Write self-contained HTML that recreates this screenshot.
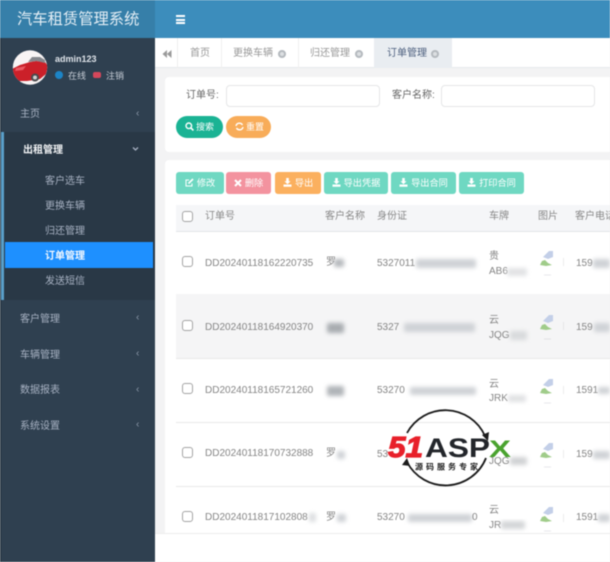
<!DOCTYPE html>
<html><head><meta charset="utf-8">
<style>
*{box-sizing:border-box}
html,body{margin:0;padding:0;width:610px;height:562px;overflow:hidden;background:#f3f3f4;font-family:"Liberation Sans","Noto Sans CJK SC",sans-serif;color:#676a6c}
.a{position:absolute;white-space:nowrap}
#root{position:relative;width:610px;height:562px;overflow:hidden;filter:blur(.5px)}
.m{font-size:10px;color:#a7b1c2;line-height:14px}
.ch{font-size:10px;color:#8d99aa;line-height:14px}
.sub{font-size:10px;color:#a7b1c2;line-height:14px;left:45px}
.tab{font-size:10px;color:#999;line-height:14px;top:47px}
.x{width:8px;height:8px;border-radius:50%;background:#dcdfe2;border:2px solid #b4b9be;top:50px}
.inp{height:22px;width:154px;top:85px;background:#fff;border:1px solid #e5e6e7;border-radius:4px}
.btn{height:22px;top:172px;border-radius:3px;color:#fff;font-size:9.2px;line-height:22px;text-align:center}
.btn svg{vertical-align:-1px;margin-right:3px}
.g{background:#6fd8c2}
.cb{width:11px;height:11px;border:1px solid #a4a4a4;border-radius:3px;left:182px;background:#fff}
.th{font-size:10px;color:#888;line-height:14px;top:210px}
.td{font-size:10px;color:#858585;line-height:14px}
.bl{position:absolute;background:#cfd2d6;filter:blur(2.2px);border-radius:2px}
.pic{width:18px;height:28px;left:538px}
</style></head><body><div id="root">

<div class="a" style="left:0;top:0;width:610px;height:38px;background:#3c8dbc"></div>
<div class="a" style="left:0;top:0;width:155px;height:38px;background:#367fa9"></div>
<div class="a" style="left:17px;top:10px;font-size:15.3px;line-height:20px;color:#e4eef5">汽车租赁管理系统</div>
<div class="a" style="left:176px;top:15px;width:9px;height:2px;background:#fff"></div>
<div class="a" style="left:176px;top:18.5px;width:9px;height:2px;background:#fff"></div>
<div class="a" style="left:176px;top:22px;width:9px;height:2px;background:#fff"></div>

<div class="a" style="left:0;top:38px;width:155px;height:524px;background:#2f4050"></div>
<div class="a" style="left:0;top:38px;width:1px;height:524px;background:#1e2c39"></div>
<div class="a" style="left:1px;top:132px;width:154px;height:168px;background:#293846"></div>
<div class="a" style="left:1px;top:132px;width:3px;height:168px;background:#5a9fc9"></div>

<svg class="a" style="left:12px;top:49px" width="36" height="37" viewBox="0 0 36 37">
<defs><clipPath id="c"><circle cx="18" cy="18.5" r="17.2"/></clipPath></defs>
<circle cx="18" cy="18.5" r="17.2" fill="#f8f4f4"/>
<g clip-path="url(#c)">
<path d="M0 20 L8 16 L18 13 L24 12 L33 13 L36 17 L34 25 L28 30 L15 32 L5 32 L0 28Z" fill="#cb2029"/>
<path d="M16 13 L20 8 L28 8 L33 11 L33 14 L25 12Z" fill="#85878c"/>
<path d="M4 19 L14 17 L11 21 L3 22Z" fill="#ea5a63"/>
<circle cx="23" cy="28.5" r="4" fill="#4a4a4d"/><circle cx="23" cy="28.5" r="2" fill="#cfcfcf"/>
<path d="M0 28 L8 32 L3 35Z" fill="#7c2a2e"/>
</g></svg>
<div class="a" style="left:55px;top:52px;font-size:9px;font-weight:bold;color:#dfe4ea;line-height:14px">admin123</div>
<div class="a" style="left:55px;top:71px;width:8px;height:8px;border-radius:50%;background:#1c84c6"></div>
<div class="a" style="left:68px;top:69px;font-size:9px;color:#c5ccd5;line-height:14px">在线</div>
<div class="a" style="left:93px;top:72px;width:8px;height:6px;border-radius:2px;background:#d5475b"></div>
<div class="a" style="left:106px;top:69px;font-size:9px;color:#c5ccd5;line-height:14px">注销</div>

<div class="a m" style="left:20px;top:108px">主页</div><div class="a ch" style="left:136px;top:107px">‹</div>
<div class="a" style="left:23px;top:144px;font-size:10px;font-weight:bold;color:#f0f2f4;line-height:14px">出租管理</div>
<svg class="a" style="left:132px;top:146px" width="7" height="6"><path d="M1 1.5 L3.5 4 L6 1.5" fill="none" stroke="#a7b1c2" stroke-width="1.3"/></svg>
<div class="a sub" style="top:175px">客户选车</div>
<div class="a sub" style="top:200px">更换车辆</div>
<div class="a sub" style="top:225px">归还管理</div>
<div class="a" style="left:5px;top:242px;width:148px;height:26px;background:#1e90ff"></div>
<div class="a sub" style="top:250px;color:#f2f8ff;font-weight:bold">订单管理</div>
<div class="a sub" style="top:275px">发送短信</div>
<div class="a m" style="left:20px;top:313px">客户管理</div><div class="a ch" style="left:136px;top:311px">‹</div>
<div class="a m" style="left:20px;top:349px">车辆管理</div><div class="a ch" style="left:136px;top:347px">‹</div>
<div class="a m" style="left:20px;top:384px">数据报表</div><div class="a ch" style="left:136px;top:383px">‹</div>
<div class="a m" style="left:20px;top:420px">系统设置</div><div class="a ch" style="left:136px;top:418px">‹</div>

<div class="a" style="left:155px;top:38px;width:455px;height:30px;background:#fff;border-bottom:1px solid #e7eaec"></div>
<div class="a" style="left:177px;top:38px;width:1px;height:30px;background:#eee"></div>
<div class="a" style="left:221px;top:38px;width:1px;height:30px;background:#f0f0f0"></div>
<div class="a" style="left:298px;top:38px;width:1px;height:30px;background:#f0f0f0"></div>
<div class="a" style="left:374px;top:38px;width:78px;height:30px;background:#e9edf1"></div>
<svg class="a" style="left:162px;top:50px" width="10" height="8"><path d="M5 0 L0.5 4 L5 8Z M9.5 0 L5 4 L9.5 8Z" fill="#9a9a9a"/></svg>
<div class="a tab" style="left:190px">首页</div>
<div class="a tab" style="left:233px">更换车辆</div><div class="a x" style="left:278px"></div>
<div class="a tab" style="left:310px">归还管理</div><div class="a x" style="left:355px"></div>
<div class="a tab" style="left:387px;color:#4c5f7e">订单管理</div><div class="a x" style="left:431px"></div>

<div class="a" style="left:165px;top:77px;width:445px;height:75px;background:#fff;border-radius:4px 0 0 4px"></div>
<div class="a" style="left:186px;top:89px;font-size:10px;line-height:14px;color:#666">订单号:</div>
<div class="a inp" style="left:226px"></div>
<div class="a" style="left:392px;top:89px;font-size:10px;line-height:14px;color:#666">客户名称:</div>
<div class="a inp" style="left:441px"></div>
<div class="a" style="left:176px;top:116px;width:47px;height:22px;border-radius:11px;background:#1ab394;color:#fff;font-size:9px;line-height:22px;padding-left:9px">
<svg width="9" height="9" viewBox="0 0 9 9" style="vertical-align:-1px;margin-right:2px"><circle cx="3.8" cy="3.8" r="2.8" fill="none" stroke="#fff" stroke-width="1.4"/><path d="M6 6 L8.4 8.4" stroke="#fff" stroke-width="1.6"/></svg>搜索</div>
<div class="a" style="left:226px;top:116px;width:45px;height:22px;border-radius:11px;background:#f8ac59;color:#fff;font-size:9px;line-height:22px;padding-left:9px">
<svg width="9" height="9" viewBox="0 0 9 9" style="vertical-align:-1px;margin-right:2px"><path d="M1 4 A3.5 3.5 0 0 1 7.5 3 M8 5 A3.5 3.5 0 0 1 1.5 6" fill="none" stroke="#fff" stroke-width="1.4"/></svg>重置</div>

<div class="a" style="left:165px;top:160px;width:445px;height:373px;background:#fff;border-radius:4px 0 0 0"></div>
<div class="a" style="left:155px;top:533px;width:455px;height:29px;background:#fff;border-top:1px solid #ececec"></div>
<div class="a btn g" style="left:176px;width:48px"><svg width="9" height="9" viewBox="0 0 9 9"><path d="M7 5.5V8H1V2H4" fill="none" stroke="#fff" stroke-width="1"/><path d="M3.5 5.5 L8 1" stroke="#fff" stroke-width="1.6"/></svg>修改</div>
<div class="a btn" style="left:226px;width:45px;background:#f3939f"><svg width="8" height="8" viewBox="0 0 8 8"><path d="M1 1 L7 7 M7 1 L1 7" stroke="#fff" stroke-width="2"/></svg>删除</div>
<div class="a btn" style="left:275px;width:46px;background:#fbb05f"><svg width="9" height="9" viewBox="0 0 9 9"><path d="M3.2 0H5.8V3.2H7.6L4.5 6.2 1.4 3.2H3.2Z M0.5 6.5H8.5V8.8H0.5Z" fill="#fff"/></svg>导出</div>
<div class="a btn g" style="left:324px;width:64px"><svg width="9" height="9" viewBox="0 0 9 9"><path d="M3.2 0H5.8V3.2H7.6L4.5 6.2 1.4 3.2H3.2Z M0.5 6.5H8.5V8.8H0.5Z" fill="#fff"/></svg>导出凭据</div>
<div class="a btn g" style="left:391px;width:65px"><svg width="9" height="9" viewBox="0 0 9 9"><path d="M3.2 0H5.8V3.2H7.6L4.5 6.2 1.4 3.2H3.2Z M0.5 6.5H8.5V8.8H0.5Z" fill="#fff"/></svg>导出合同</div>
<div class="a btn g" style="left:459px;width:65px"><svg width="9" height="9" viewBox="0 0 9 9"><path d="M3.2 0H5.8V3.2H7.6L4.5 6.2 1.4 3.2H3.2Z M0.5 6.5H8.5V8.8H0.5Z" fill="#fff"/></svg>打印合同</div>

<div class="a" style="left:176px;top:205px;width:434px;height:27px;background:#f5f6f8;border-bottom:1px solid #e3e5e8"></div>
<div class="a cb" style="top:211px"></div>
<div class="a th" style="left:205px">订单号</div>
<div class="a th" style="left:325px">客户名称</div>
<div class="a th" style="left:377px">身份证</div>
<div class="a th" style="left:489px">车牌</div>
<div class="a th" style="left:538px">图片</div>
<div class="a th" style="left:575px">客户电话</div>

<div class="a" style="left:176px;top:294px;width:434px;height:65px;background:#f5f5f6;border-bottom:1px solid #e8e8e8"></div>
<div class="a" style="left:176px;top:422px;width:434px;height:1px;background:#e8e8e8"></div>
<div class="a" style="left:176px;top:486px;width:434px;height:1px;background:#e8e8e8"></div>

<!-- rows -->
<div class="a cb" style="top:256px"></div>
<div class="a td" style="left:205px;top:257px">DD20240118162220735</div>
<div class="a td" style="left:326px;top:256px">罗</div><div class="bl" style="left:334px;top:259px;width:10px;height:8px;background:#b5b8bc"></div>
<div class="a td" style="left:377px;top:257px">5327011</div><div class="bl" style="left:416px;top:259px;width:60px;height:9px"></div>
<div class="a td" style="left:489px;top:250px">贵</div><div class="a td" style="left:489px;top:265px">AB6</div><div class="bl" style="left:507px;top:268px;width:20px;height:8px;background:#e2e3e5"></div>
<div class="a td" style="left:576px;top:257px">159</div><div class="bl" style="left:593px;top:259px;width:17px;height:9px"></div>

<div class="a cb" style="top:320px"></div>
<div class="a td" style="left:205px;top:321px">DD20240118164920370</div>
<div class="bl" style="left:327px;top:323px;width:17px;height:10px;background:#a8acb0"></div>
<div class="a td" style="left:377px;top:321px">5327</div><div class="bl" style="left:404px;top:323px;width:71px;height:9px"></div>
<div class="a td" style="left:489px;top:314px">云</div><div class="a td" style="left:489px;top:329px">JQG</div><div class="bl" style="left:510px;top:331px;width:17px;height:9px;background:#d8dadc"></div>
<div class="a td" style="left:576px;top:321px">159</div><div class="bl" style="left:594px;top:323px;width:16px;height:9px"></div>

<div class="a cb" style="top:383px"></div>
<div class="a td" style="left:205px;top:384px">DD20240118165721260</div>
<div class="bl" style="left:327px;top:386px;width:17px;height:10px;background:#b0b4b8"></div>
<div class="a td" style="left:377px;top:384px">53270</div><div class="bl" style="left:410px;top:387px;width:66px;height:8px"></div>
<div class="a td" style="left:489px;top:378px">云</div><div class="a td" style="left:489px;top:392px">JRK</div><div class="bl" style="left:508px;top:395px;width:18px;height:7px;background:#e0e1e3"></div>
<div class="a td" style="left:576px;top:384px">1591</div><div class="bl" style="left:598px;top:387px;width:12px;height:7px"></div>

<div class="a cb" style="top:447px"></div>
<div class="a td" style="left:205px;top:447px">DD20240118170732888</div>
<div class="a td" style="left:326px;top:447px">罗</div><div class="bl" style="left:337px;top:451px;width:8px;height:8px"></div>
<div class="a td" style="left:377px;top:448px">53</div>
<div class="a td" style="left:489px;top:455px">JQG</div><div class="bl" style="left:510px;top:457px;width:17px;height:8px;background:#d0d2d4"></div>
<div class="a td" style="left:576px;top:448px">159</div><div class="bl" style="left:593px;top:451px;width:17px;height:8px"></div>

<div class="a cb" style="top:511px"></div>
<div class="a td" style="left:205px;top:511px">DD2024011817102808</div><div class="bl" style="left:309px;top:513px;width:7px;height:9px;background:#dcdee0"></div>
<div class="a td" style="left:326px;top:511px">罗</div><div class="bl" style="left:337px;top:514px;width:9px;height:8px"></div>
<div class="a td" style="left:377px;top:511px">53270</div><div class="bl" style="left:408px;top:514px;width:64px;height:8px"></div><div class="a td" style="left:472px;top:511px">0</div>
<div class="a td" style="left:489px;top:504px">云</div>
<div class="a" style="left:176px;top:519px;width:434px;height:14px;overflow:hidden"><div class="a td" style="left:313px;top:0">JR</div><div class="bl" style="left:325px;top:2px;width:24px;height:8px;background:#d4d6d8"></div></div>
<div class="a td" style="left:576px;top:511px">1591</div><div class="bl" style="left:598px;top:514px;width:12px;height:8px"></div>

<!-- broken images -->
<svg class="a pic" style="top:250px" viewBox="0 0 18 28"><path d="M5 7 L11 1 L15 1 L15 7 L10 9Z" fill="#c3cfe8"/><path d="M2 15 L4 11 L7 10 L10 13 L14 15 L8 16Z" fill="#a0cc8a"/><path d="M6 25 L13 25" stroke="#e8e8ea" stroke-width="1"/></svg>
<svg class="a pic" style="top:314px" viewBox="0 0 18 28"><path d="M5 7 L11 1 L15 1 L15 7 L10 9Z" fill="#c3cfe8"/><path d="M2 15 L4 11 L7 10 L10 13 L14 15 L8 16Z" fill="#a0cc8a"/><path d="M6 25 L13 25" stroke="#e2e2e4" stroke-width="1"/></svg>
<svg class="a pic" style="top:378px" viewBox="0 0 18 28"><path d="M5 7 L11 1 L15 1 L15 7 L10 9Z" fill="#c3cfe8"/><path d="M2 15 L4 11 L7 10 L10 13 L14 15 L8 16Z" fill="#a0cc8a"/><path d="M6 25 L13 25" stroke="#e8e8ea" stroke-width="1"/></svg>
<svg class="a pic" style="top:442px" viewBox="0 0 18 28"><path d="M5 7 L11 1 L15 1 L15 7 L10 9Z" fill="#c3cfe8"/><path d="M2 15 L4 11 L7 10 L10 13 L14 15 L8 16Z" fill="#a0cc8a"/><path d="M6 25 L13 25" stroke="#e8e8ea" stroke-width="1"/></svg>
<svg class="a pic" style="top:506px" viewBox="0 0 18 28"><path d="M5 7 L11 1 L15 1 L15 7 L10 9Z" fill="#c3cfe8"/><path d="M2 15 L4 11 L7 10 L10 13 L14 15 L8 16Z" fill="#a0cc8a"/><path d="M6 25 L13 25" stroke="#e8e8ea" stroke-width="1"/></svg>
<div class="a" style="left:563px;top:258px;width:1px;height:8px;background:#ececec"></div>
<div class="a" style="left:563px;top:322px;width:1px;height:8px;background:#e6e6e6"></div>
<div class="a" style="left:563px;top:386px;width:1px;height:8px;background:#ececec"></div>
<div class="a" style="left:563px;top:450px;width:1px;height:8px;background:#ececec"></div>
<div class="a" style="left:563px;top:514px;width:1px;height:8px;background:#ececec"></div>

<!-- watermark: svg origin at page (385,400); circle centre page (447,447) -->
<svg class="a" style="left:385px;top:400px" width="130" height="96" viewBox="0 0 130 96">
<path d="M22 33 A43.5 43.5 0 0 1 100 36" fill="none" stroke="#1b1b1b" stroke-width="1.8"/>
<path d="M22 62 A43.5 43.5 0 0 0 101 58" fill="none" stroke="#1b1b1b" stroke-width="1.8"/>
<path d="M97 35 L104 32 L103 41Z M22 58 L17 65 L25 66Z" fill="#1b1b1b"/>
<text x="3" y="57" font-family="Liberation Sans" font-size="29" font-weight="bold" font-style="italic" fill="#e8202a" stroke="#e8202a" stroke-width="1.2" textLength="35" lengthAdjust="spacingAndGlyphs">51</text>
<text x="40" y="57" font-family="Liberation Sans" font-size="27" font-weight="bold" fill="#23262b" textLength="65" lengthAdjust="spacingAndGlyphs">ASP</text>
<text x="104" y="57" font-family="Liberation Sans" font-size="24" font-weight="bold" fill="#4aa32f" textLength="22" lengthAdjust="spacingAndGlyphs">X</text>
<text x="30" y="69.5" font-family="Liberation Sans,Noto Sans CJK SC,sans-serif" font-size="8" font-weight="bold" fill="#222" letter-spacing="3">源码服务专家</text>
</svg>

</div></body></html>
